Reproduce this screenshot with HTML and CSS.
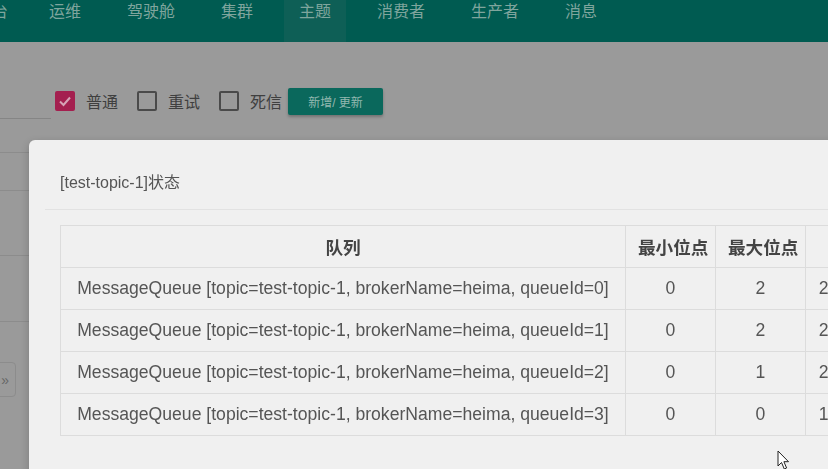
FILE: index.html
```html
<!DOCTYPE html>
<html lang="zh">
<head>
<meta charset="utf-8">
<title>主题</title>
<link rel="stylesheet" href="styles.css">
</head>
<body>
<header class="nav">
  <ul class="nav-list">
    <li class="nav-item first">平台</li>
    <li class="nav-item">运维</li>
    <li class="nav-item">驾驶舱</li>
    <li class="nav-item">集群</li>
    <li class="nav-item active">主题</li>
    <li class="nav-item">消费者</li>
    <li class="nav-item">生产者</li>
    <li class="nav-item">消息</li>
  </ul>
</header>
<main class="page">
  <div class="toolbar">
    <div class="search"></div>
    <label class="check checked"><span class="box"><svg viewBox="0 0 20 20" width="20" height="20"><path d="M5 10.5 L8.5 14 L15 6.5" fill="none" stroke="#d6a3b6" stroke-width="2"/></svg></span>普通</label>
    <label class="check"><span class="box"></span>重试</label>
    <label class="check"><span class="box"></span>死信</label>
    <button class="btn">新增/ 更新</button>
  </div>
  <div class="list">
    <div class="list-row"></div>
    <div class="list-row"></div>
    <div class="list-row"></div>
    <div class="list-row"></div>
  </div>
  <div class="pager"><span class="page-btn">»</span></div>
</main>

<div class="modal">
  <div class="modal-header">[test-topic-1]状态</div>
  <div class="modal-body">
    <table class="qtable">
      <colgroup>
        <col class="c-queue"><col class="c-num"><col class="c-num"><col class="c-time">
      </colgroup>
      <thead>
        <tr><th>队列</th><th>最小位点</th><th>最大位点</th><th>上次更新时间</th></tr>
      </thead>
      <tbody>
        <tr><td>MessageQueue [topic=test-topic-1, brokerName=heima, queueId=0]</td><td>0</td><td>2</td><td>2023-02-13 10:21:33</td></tr>
        <tr><td>MessageQueue [topic=test-topic-1, brokerName=heima, queueId=1]</td><td>0</td><td>2</td><td>2023-02-13 10:21:33</td></tr>
        <tr><td>MessageQueue [topic=test-topic-1, brokerName=heima, queueId=2]</td><td>0</td><td>1</td><td>2023-02-13 10:21:33</td></tr>
        <tr><td>MessageQueue [topic=test-topic-1, brokerName=heima, queueId=3]</td><td>0</td><td>0</td><td>1970-01-01 08:00:00</td></tr>
      </tbody>
    </table>
  </div>
</div>

<svg class="cursor" width="14" height="21" viewBox="0 0 14 21"><path d="M1 1 L1 16 L4.5 12.5 L7.3 19 L9.6 18 L6.9 11.7 L11.5 11.7 Z" fill="#fff" stroke="#222" stroke-width="1" stroke-linejoin="round"/></svg>
</body>
</html>
```

FILE: styles.css
```css
* { box-sizing: border-box; }
html, body { margin: 0; padding: 0; }
body {
  width: 828px;
  height: 469px;
  overflow: hidden;
  background: #9a9a9a;
  font-family: "Liberation Sans", "Noto Sans CJK SC", sans-serif;
  color: #444;
}

.nav {
  height: 42px;
  background: #005b51;
  overflow: hidden;
}
.nav-list {
  list-style: none;
  margin: 0 0 0 -39px;
  padding: 0;
  display: flex;
  gap: 16px;
  height: 42px;
}
.nav-item {
  padding: 0 15px;
  height: 42px;
  line-height: 24px;
  font-size: 16px;
  color: #7fa59d;
  white-space: nowrap;
}
.nav-item.first { margin-right: -5px; }
.nav-item.active { background: #0e5f56; }

.page { padding: 0; }
.toolbar {
  display: flex;
  align-items: center;
  padding-top: 41px;
  height: 77px;
}
.search {
  width: 51px;
  height: 36px;
  border-bottom: 1px solid #858585;
  margin-right: 4px;
}
.check {
  display: flex;
  align-items: center;
  font-size: 16px;
  color: #3f3f3f;
  margin-right: 19px;
}
.check .box {
  width: 20px;
  height: 20px;
  border: 2px solid #4a4a4a;
  border-radius: 2px;
  margin-right: 11px;
  display: flex;
  align-items: center;
  justify-content: center;
}
.check.checked .box {
  background: #a41f4f;
  border-color: #a41f4f;
}
.check.checked .box svg { flex: none; }
.btn {
  margin-left: -13px;
  width: 95px;
  height: 27px;
  border: none;
  border-radius: 2px;
  background: #0a685c;
  color: #93b8b0;
  font-family: "Liberation Sans", "Noto Sans CJK SC", sans-serif;
  font-size: 12px;
  padding: 0;
  box-shadow: 0 2px 3px rgba(0,0,0,0.25);
}

.list { width: 828px; }
.list-row { border-bottom: 1px solid #8c8c8c; }
.list-row:nth-child(1) { height: 34px; }
.list-row:nth-child(2) { height: 38px; }
.list-row:nth-child(3) { height: 65px; }
.list-row:nth-child(4) { height: 66px; }

.pager { margin-top: 40px; }
.page-btn {
  display: flex;
  align-items: center;
  justify-content: flex-end;
  margin-left: -20px;
  width: 36px;
  height: 35px;
  border: 1px solid #8c8c8c;
  border-radius: 4px;
  padding-right: 6px;
  color: #666;
  font-size: 14px;
}

.modal {
  position: fixed;
  left: 29px;
  top: 140px;
  width: 997px;
  height: 420px;
  background: #f0f0f0;
  border-radius: 6px;
  padding: 0 16px;
  box-shadow: 0 3px 9px rgba(0,0,0,0.2);
}
.modal-header {
  padding: 31px 15px 14px;
  line-height: 24px;
  font-size: 16px;
  color: #555;
  border-bottom: 1px solid #e2e2e2;
}
.modal-body { padding: 15px; }
.qtable {
  border-collapse: collapse;
  table-layout: fixed;
  width: 935px;
  font-size: 17.6px;
  color: #555;
}
.c-queue { width: 565px; }
.c-num { width: 90px; }
.c-time { width: 190px; }
.qtable th, .qtable td {
  border: 1px solid #dcdcdc;
  height: 42px;
  padding: 0 12px;
  text-align: center;
  white-space: nowrap;
}
.qtable th {
  font-weight: bold;
  color: #444;
}

.cursor {
  position: fixed;
  left: 777px;
  top: 450px;
}
```
